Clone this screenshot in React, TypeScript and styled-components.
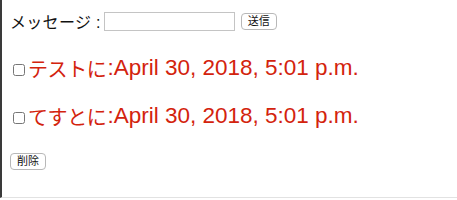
import React, { useState } from "react";
import styled, { createGlobalStyle } from "styled-components";

const Global = createGlobalStyle`
	html, body {
		margin: 0;
		padding: 0;
		background: #fff;
	}
	body {
		font-family: "Liberation Sans", "Noto Sans CJK JP", sans-serif;
	}
`;

const Page = styled.div`
	width: 457px;
	height: 198px;
	box-sizing: border-box;
	border-left: 2px solid #3a3a3a;
	border-bottom: 1px solid #e2e2e2;
	padding: 10px 0 0 8px;
	display: flex;
	flex-direction: column;
`;

const SendForm = styled.form`
	display: flex;
	align-items: center;
	height: 22px;
`;

const Label = styled.label`
	font-size: 16px;
	color: #111;
	margin-right: 3px;
	letter-spacing: 0.3px;
`;

const TextInput = styled.input`
	width: 131px;
	height: 19px;
	box-sizing: border-box;
	border: 1px solid #c4c4c4;
	padding: 0 3px;
	margin: 0 6px 0 0;
	outline: none;
`;

const Btn = styled.button`
	font-family: "Liberation Sans", "Noto Sans CJK JP", sans-serif;
	font-size: 11px;
	height: 17px;
	padding: 0 6px;
	background: #fff;
	border: 1px solid #b8b8b8;
	border-radius: 4px;
	color: #111;
	line-height: 15px;
`;

const List = styled.div`
	display: flex;
	flex-direction: column;
	gap: 24px;
	margin-top: 24px;
`;

const Row = styled.label`
	display: flex;
	align-items: center;
	height: 24px;
	color: #d3230d;
	font-size: 22.5px;
`;

const Name = styled.span`
	font-size: 20px;
	letter-spacing: -0.4px;
	margin-right: 1px;
	margin-top: 1px;
`;

const Check = styled.input`
	width: 12px;
	height: 12px;
	margin: 4px 3px 0 3px;
`;

const DeleteWrap = styled.div`
	margin-top: 23px;
`;

const items = [
	{ id: 1, text: "テストに", at: "April 30, 2018, 5:01 p.m." },
	{ id: 2, text: "てすとに", at: "April 30, 2018, 5:01 p.m." },
];

const App = () => {
	const [msg, setMsg] = useState("");
	const [checked, setChecked] = useState<number[]>([]);

	const toggle = (id: number) =>
		setChecked((c) => (c.includes(id) ? c.filter((x) => x !== id) : [...c, id]));

	return (
		<>
			<Global />
			<Page>
				<SendForm onSubmit={(e) => e.preventDefault()}>
					<Label>メッセージ :</Label>
					<TextInput value={msg} onChange={(e) => setMsg(e.target.value)} />
					<Btn type="submit">送信</Btn>
				</SendForm>
				<List>
					{items.map((item) => (
						<Row key={item.id}>
							<Check
								type="checkbox"
								checked={checked.includes(item.id)}
								onChange={() => toggle(item.id)}
							/>
							<Name>{item.text}</Name>:{item.at}
						</Row>
					))}
				</List>
				<DeleteWrap>
					<Btn type="button">削除</Btn>
				</DeleteWrap>
			</Page>
		</>
	);
};

export default App;
